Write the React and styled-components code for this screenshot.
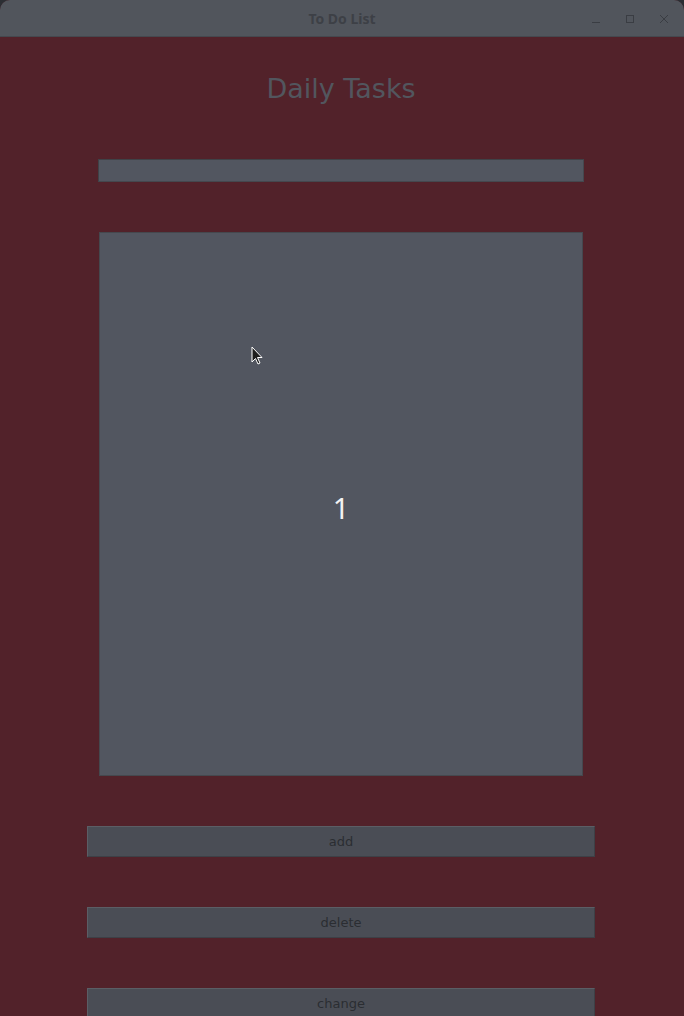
import React from 'react'
import styled, { createGlobalStyle } from 'styled-components'

const GlobalStyle = createGlobalStyle`
  html, body {
    margin: 0;
    padding: 0;
    background: #2b2e33;
    overflow: hidden;
  }
`

const Window = styled.div`
  width: 684px;
  height: 1016px;
  display: flex;
  flex-direction: column;
  overflow: hidden;
  border-radius: 10px 10px 0 0;
  background: #52222a;
`

const TitleBar = styled.div`
  height: 37px;
  flex: none;
  position: relative;
  display: flex;
  align-items: center;
  justify-content: center;
  background: #51555c;
  border-bottom: 1px solid #45484e;
  box-sizing: border-box;
`

const TitleText = styled.span`
  font-family: "Noto Sans", "DejaVu Sans", sans-serif;
  font-weight: 700;
  font-size: 14px;
  color: #3d4046;
  margin-top: 1px;
`

const Controls = styled.div`
  position: absolute;
  right: 10px;
  top: 0;
  height: 37px;
  display: flex;
  align-items: center;
  gap: 14px;
`

const ControlBtn = styled.div`
  width: 20px;
  height: 20px;
  display: flex;
  align-items: center;
  justify-content: center;
`

const Body = styled.div`
  flex: 1;
  display: flex;
  flex-direction: column;
  align-items: center;
  position: relative;
  padding-right: 2px;
`

const Heading = styled.h1`
  margin: 33px 0 0;
  height: 38px;
  line-height: 38px;
  font-family: "DejaVu Sans", "Noto Sans", sans-serif;
  font-weight: 400;
  font-size: 27px;
  color: #52565e;
`

const Entry = styled.input`
  margin-top: 51px;
  width: 486px;
  height: 23px;
  box-sizing: border-box;
  background: #525660;
  border: 1px solid #45484e;
  border-top-color: #3f4247;
  border-left-color: #3f4247;
  outline: none;
  padding: 0 4px;
`

const ListBox = styled.div`
  margin-top: 50px;
  width: 484px;
  height: 544px;
  box-sizing: border-box;
  background: #525660;
  border: 1px solid #45484e;
  display: flex;
  align-items: center;
  justify-content: center;
  padding-top: 6px;
`

const ListItem = styled.span`
  font-family: "Noto Sans", "Liberation Sans", sans-serif;
  font-size: 29px;
  color: #f2f2f2;
`

const ActionButton = styled.button`
  margin-top: 50px;
  width: 508px;
  height: 31px;
  flex: none;
  box-sizing: border-box;
  background: #4a4d55;
  border: 1px solid #3d4046;
  border-top-color: #5b5e65;
  border-left-color: #5b5e65;
  font-family: "DejaVu Sans", "Noto Sans", sans-serif;
  font-size: 13px;
  color: #2b2d32;
  padding: 0;
`

const Cursor = styled.svg`
  position: absolute;
  left: 251px;
  top: 309px;
`

export default function App() {
  return (
    <>
      <GlobalStyle />
      <Window>
        <TitleBar>
          <TitleText>To Do List</TitleText>
          <Controls>
            <ControlBtn>
              <svg width="12" height="12" viewBox="0 0 12 12">
                <path d="M2 9.5h8" stroke="#3a3d43" strokeWidth="1" />
              </svg>
            </ControlBtn>
            <ControlBtn>
              <svg width="12" height="12" viewBox="0 0 12 12">
                <rect x="2.5" y="2.5" width="7" height="7" fill="none" stroke="#3a3d43" strokeWidth="1" />
              </svg>
            </ControlBtn>
            <ControlBtn>
              <svg width="12" height="12" viewBox="0 0 12 12">
                <path d="M2 2l8 8M10 2l-8 8" stroke="#3a3d43" strokeWidth="1" />
              </svg>
            </ControlBtn>
          </Controls>
        </TitleBar>
        <Body>
          <Heading>Daily Tasks</Heading>
          <Entry />
          <ListBox>
            <ListItem>1</ListItem>
          </ListBox>
          <ActionButton>add</ActionButton>
          <ActionButton>delete</ActionButton>
          <ActionButton>change</ActionButton>
          <Cursor width="14" height="20" viewBox="0 0 14 20">
            <path d="M1 1v15l3.5-3.5 2.5 5.5 2-1-2.5-5.5H11z" fill="#1e1e1e" stroke="#fff" strokeWidth="1" strokeLinejoin="round" />
          </Cursor>
        </Body>
      </Window>
    </>
  )
}
